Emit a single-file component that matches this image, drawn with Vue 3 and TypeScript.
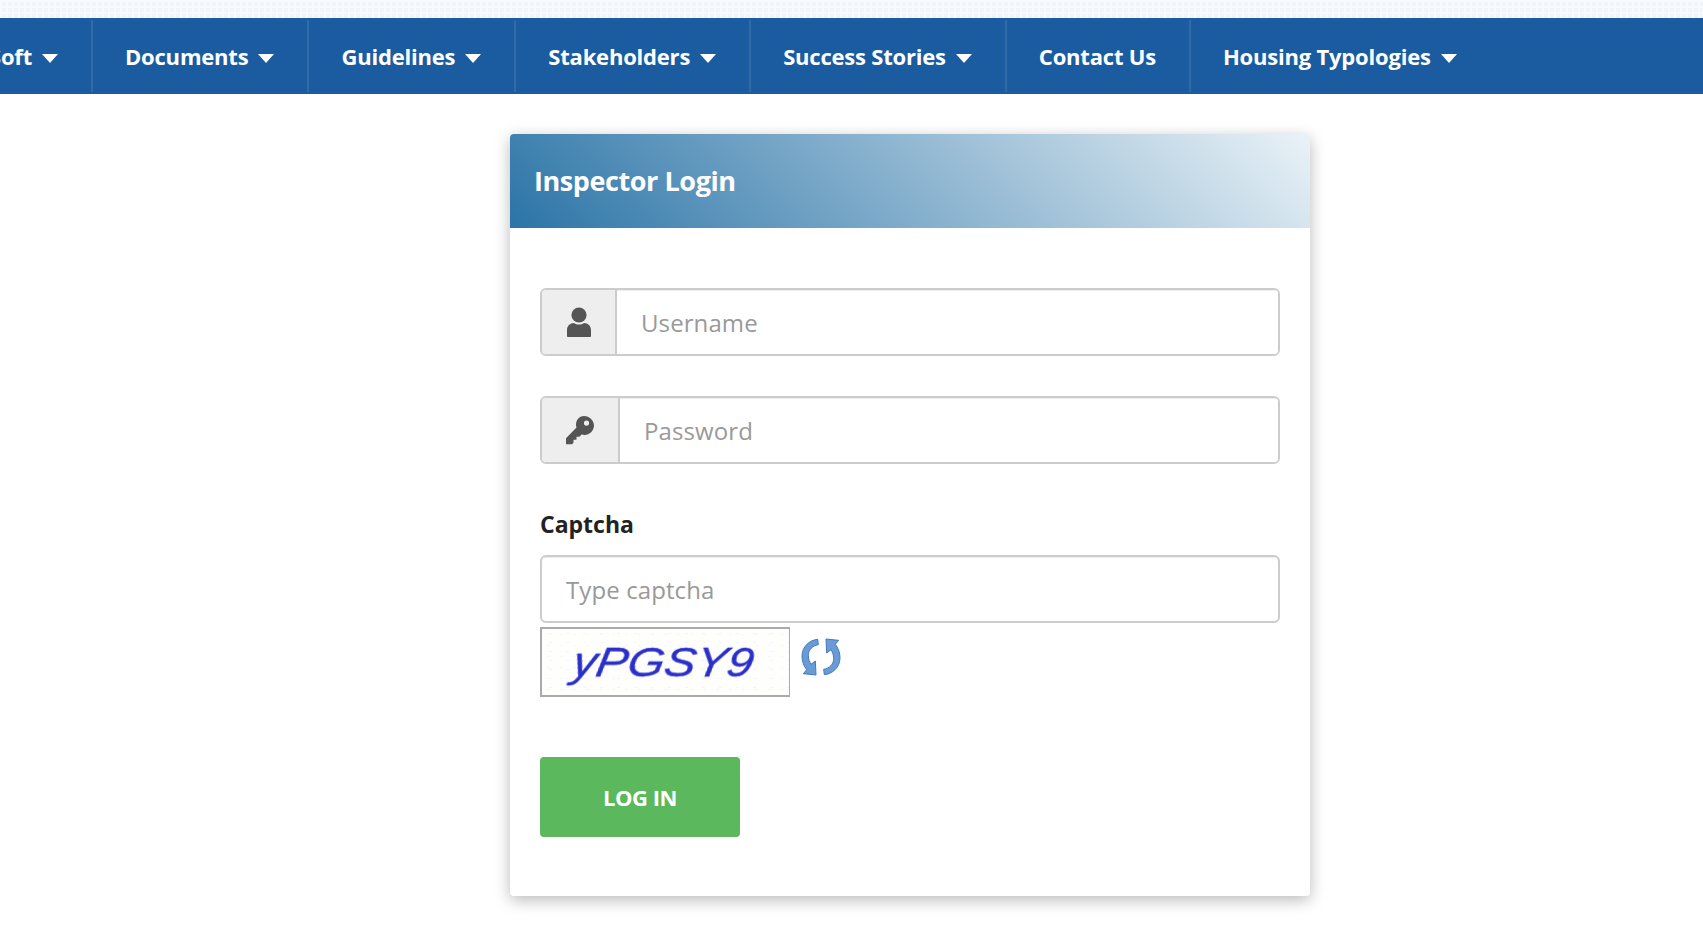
<template>
  <div class="page">
    <div class="top-strip"></div>
    <nav class="nav">
      <a v-for="item in menu" :key="item.label" class="nav-item" :class="{ clipped: item.clipped }">
        <span>{{ item.label }}</span>
        <i v-if="item.caret" class="caret"></i>
      </a>
    </nav>

    <main class="main">
      <section class="card">
        <h1 class="card-head">Inspector Login</h1>
        <form class="card-body" @submit.prevent>
          <div class="input-group">
            <span class="addon user">
              <svg width="26" height="30" viewBox="0 0 26 30">
                <circle cx="13" cy="8" r="7.6" fill="#555" />
                <path d="M1 29v-6c0-4 3-7 7-7 1.500 1 3 1.500 5 1.500s3.500-.5 5-1.500c4 0 7 3 7 7v6c0 .6-.4 1-1 1H2c-.6 0-1-.4-1-1z" fill="#555" />
              </svg>
            </span>
            <input type="text" placeholder="Username" />
          </div>
          <div class="input-group">
            <span class="addon key">
              <svg width="30" height="30" viewBox="0 0 30 30">
                <path fill="#555" fill-rule="evenodd" d="M19 1c5.500 0 10 4.500 10 9.500S24.500 20 19.500 20c-1 0-2-.2-3-.5l-2 2.300h-3v3h-3v3l-1.500 1.500H1v-6L11.500 12.500c-.3-1-.5-1.500-.5-2.500C11 5 14 1 19 1zm2.500 4.500a2.600 2.600 0 1 0 0 5.200 2.600 2.600 0 0 0 0-5.200z" />
              </svg>
            </span>
            <input type="password" placeholder="Password" />
          </div>
          <label class="captcha-label">Captcha</label>
          <input class="captcha-input" type="text" placeholder="Type captcha" />
          <div class="captcha-row">
            <div class="captcha-img"><span>yPGSY9</span></div>
            <svg class="refresh" width="40" height="38" viewBox="30 20 120 114">
              <path d="M80 24 L82 40 C64 43 52 56 52 72 C52 84 56 92 60 99 L73 89 L75 131 L37 127 L47 115 C38 104 33 90 33 74 C33 46 56 26 80 24 Z" fill="#6a9bd6" stroke="#3f7cbd" stroke-width="3" stroke-linejoin="round" />
              <path d="M80 24 L82 40 C64 43 52 56 52 72 C52 84 56 92 60 99 L73 89 L75 131 L37 127 L47 115 C38 104 33 90 33 74 C33 46 56 26 80 24 Z" transform="rotate(180 90 77)" fill="#6a9bd6" stroke="#3f7cbd" stroke-width="3" stroke-linejoin="round" />
            </svg>
          </div>
          <button class="login" type="button">LOG IN</button>
        </form>
      </section>
    </main>
  </div>
</template>

<script setup lang="ts">
const menu = [
  { label: 'Soft', caret: true, clipped: true },
  { label: 'Documents', caret: true },
  { label: 'Guidelines', caret: true },
  { label: 'Stakeholders', caret: true },
  { label: 'Success Stories', caret: true },
  { label: 'Contact Us', caret: false },
  { label: 'Housing Typologies', caret: true }
]
</script>

<style>
html,
body {
  margin: 0;
  background: #fff;
  overflow: hidden;
}
</style>

<style scoped>
.page {
  font-family: 'Open Sans', 'Liberation Sans', sans-serif;
  height: 938px;
  overflow: hidden;
}

.top-strip {
  height: 18px;
  background-color: #eff5f9;
  background-image: linear-gradient(90deg, #f8fbfd 2px, transparent 2px), linear-gradient(#f8fbfd 2px, transparent 2px);
  background-size: 6px 6px;
}

.nav {
  display: flex;
  height: 76px;
  background: #1a5c9f;
  align-items: center;
}

.nav-item {
  display: flex;
  align-items: center;
  gap: 10px;
  height: 72px;
  padding: 0 33px 0 32px;
  border-right: 2px solid #2f6ca6;
  color: #fff;
  font-size: 22px;
  font-weight: 700;
  letter-spacing: -0.2px;
  white-space: nowrap;
  box-sizing: border-box;
}

.nav-item:last-child {
  border-right: none;
}

.nav-item.clipped {
  width: 93px;
  padding-left: 0;
  justify-content: flex-end;
  overflow: hidden;
}

.caret {
  width: 0;
  height: 0;
  margin-top: 4px;
  border-left: 8px solid transparent;
  border-right: 8px solid transparent;
  border-top: 9px solid #fff;
}

.main {
  display: flex;
  padding: 40px 0 0 510px;
}

.card {
  width: 800px;
  height: 762px;
  background: #fff;
  border-radius: 4px;
  box-shadow: 0 4px 16px rgba(0, 0, 0, 0.28);
}

.card-head {
  margin: 0;
  height: 94px;
  padding: 0 0 2px 24px;
  box-sizing: border-box;
  display: flex;
  align-items: center;
  color: #fff;
  font-size: 27px;
  font-weight: 700;
  letter-spacing: -0.42px;
  border-radius: 4px 4px 0 0;
  background: linear-gradient(45deg, #2b74a7, #eaf2f7);
}

.card-body {
  padding: 60px 30px 0;
  display: flex;
  flex-direction: column;
}

.input-group {
  display: flex;
  height: 68px;
  margin-bottom: 40px;
  border: 2px solid #ccc;
  border-radius: 6px;
  box-sizing: border-box;
  overflow: hidden;
}

.addon {
  display: flex;
  align-items: center;
  justify-content: center;
  background: #eee;
  border-right: 2px solid #ccc;
  box-sizing: content-box;
}

.addon.user {
  width: 73px;
}

.addon.key {
  width: 76px;
}

input {
  flex: 1;
  min-width: 0;
  border: none;
  outline: none;
  padding: 1px 24px 0;
  font-family: inherit;
  font-size: 24px;
  letter-spacing: 0.1px;
  color: #555;
  background: #fff;
  box-shadow: inset 0 1px 1px rgba(0, 0, 0, 0.075);
}

input::placeholder {
  color: #999;
  opacity: 1;
}

.captcha-label {
  font-size: 23px;
  font-weight: 700;
  color: #222;
  line-height: 34px;
  margin-top: 3px;
  margin-bottom: 14px;
}

.captcha-input {
  flex: none;
  height: 68px;
  border: 2px solid #ccc;
  border-radius: 6px;
  box-sizing: border-box;
}

.captcha-row {
  display: flex;
  align-items: flex-start;
  margin-top: 4px;
}

.captcha-img {
  width: 250px;
  height: 70px;
  box-sizing: border-box;
  border: 1px solid #aaa;
  border-width: 2px 1px 2px 2px;
  display: flex;
  align-items: center;
  justify-content: center;
  font-family: 'Liberation Sans', sans-serif;
  font-style: italic;
  font-size: 42px;
  color: #2a2fc8;
  background-color: #fefefd;
  background-image: radial-gradient(#fafaee 1px, transparent 1.5px), radial-gradient(#f4f5fc 1px, transparent 1.5px);
  background-size: 13px 11px, 17px 9px;
}

.captcha-img span {
  display: block;
  transform: translateX(-2px) skewX(-10deg) scaleX(1.12);
  filter: blur(0.5px);
  -webkit-text-stroke: 0.4px #2a2fc8;
}

.refresh {
  margin: 11px 0 0 11px;
}

.login {
  width: 200px;
  height: 80px;
  margin-top: 60px;
  border: none;
  border-radius: 4px;
  background: #5cb85c;
  color: #fff;
  font-family: inherit;
  font-size: 22px;
  font-weight: 700;
  letter-spacing: -0.5px;
}
</style>
